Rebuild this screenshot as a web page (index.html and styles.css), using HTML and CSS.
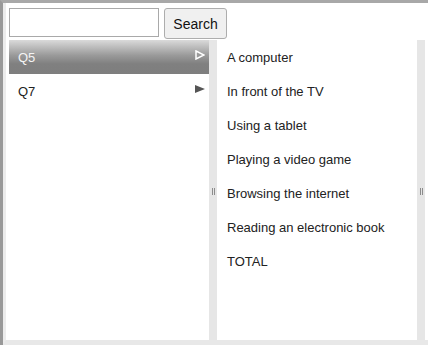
FILE: index.html
```html
<!DOCTYPE html>
<html>
<head>
<meta charset="utf-8">
<link rel="stylesheet" href="styles.css">
</head>
<body>
<div class="frame">
  <div class="inner">
    <div class="search-row">
      <input class="search-input" type="text">
      <button class="search-btn">Search</button>
    </div>
    <div class="panels">
      <div class="panel left">
        <div class="item selected"><span>Q5</span><svg class="arrow open" width="10" height="10" viewBox="0 0 10 10"><polygon points="1,1 9,5 1,9" fill="#9a9a9a" stroke="#ffffff" stroke-width="1.5" stroke-linejoin="miter"/></svg></div>
        <div class="item"><span>Q7</span><svg class="arrow closed" width="10" height="8" viewBox="0 0 10 8"><polygon points="0,0 10,4 0,8" fill="#555555"/></svg></div>
      </div>
      <div class="splitter"><span class="grip"></span></div>
      <div class="panel middle">
        <div class="item">A computer</div>
        <div class="item">In front of the TV</div>
        <div class="item">Using a tablet</div>
        <div class="item">Playing a video game</div>
        <div class="item">Browsing the internet</div>
        <div class="item">Reading an electronic book</div>
        <div class="item">TOTAL</div>
      </div>
      <div class="splitter"><span class="grip"></span></div>
    </div>
  </div>
</div>
</body>
</html>
```

FILE: styles.css
```css
html, body {
  margin: 0;
  padding: 0;
  background: #ffffff;
}
body {
  font-family: "Liberation Sans", Arial, sans-serif;
  font-size: 13px;
  color: #222;
}
.frame {
  width: 428px;
  height: 345px;
  box-sizing: border-box;
  border-top: 3px solid #a8a8a8;
  border-left: 3px solid #999999;
}
.inner {
  height: 342px;
  box-sizing: border-box;
  border-left: 3px solid #ececec;
  border-bottom: 5px solid #e8e8e8;
  padding: 5px 0 0 3px;
  display: flex;
  flex-direction: column;
}
.search-row {
  display: flex;
  align-items: flex-start;
  gap: 5px;
  height: 32px;
}
.search-input {
  width: 150px;
  height: 29px;
  box-sizing: border-box;
  margin: 0;
  border: 1px solid #a9a9a9;
  padding: 0 4px;
  background: #fff;
}
.search-btn {
  width: 63px;
  height: 31px;
  box-sizing: border-box;
  margin: 0;
  border: 1px solid #adadad;
  border-radius: 3px;
  background: #f0f0f0;
  font-family: "Liberation Sans", Arial, sans-serif;
  font-size: 14px;
  color: #111;
  padding: 0;
}
.panels {
  display: flex;
  flex: 1;
  min-height: 0;
}
.panel {
  width: 200px;
  background: #fff;
}
.splitter {
  width: 8px;
  background: #e6e6e6;
  display: flex;
  align-items: center;
  justify-content: center;
}
.grip {
  width: 1px;
  height: 7px;
  border-left: 1px solid #8c8c8c;
  border-right: 1px solid #8c8c8c;
  margin-top: 2px;
}
.item {
  height: 34px;
  display: flex;
  align-items: center;
  justify-content: space-between;
}
.left .item {
  padding: 0 4px 0 9px;
}
.middle .item {
  padding-left: 10px;
}
.item.selected {
  background: linear-gradient(to bottom, #dadada 0%, #9a9a9a 45%, #808080 70%, #7e7e7e 100%);
  color: #f4f4f4;
}
.arrow {
  display: block;
}
.arrow.open {
  margin-top: -4px;
}
.arrow.closed {
  margin-top: -5px;
}
```
